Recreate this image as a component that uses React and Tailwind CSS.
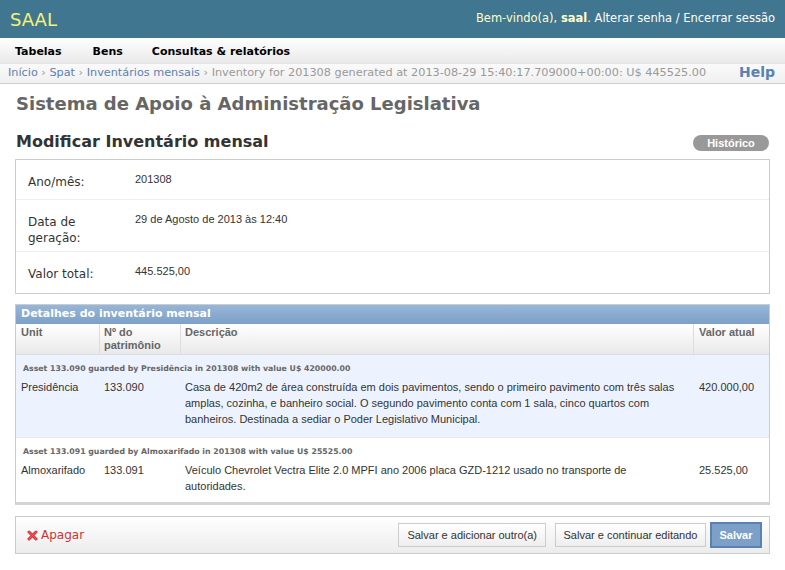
import { useState } from "react";

const ui = { fontFamily: '"DejaVu Sans", sans-serif' };
const arial = { fontFamily: '"Liberation Sans", Arial, sans-serif' };

const fields = [
  { label: "Ano/mês:", value: "201308", h: "h-[40px]" },
  { label: "Data de geração:", value: "29 de Agosto de 2013 às 12:40", h: "h-[52px]" },
  { label: "Valor total:", value: "445.525,00", h: "h-[41px]" },
];

const items = [
  {
    title: "Asset 133.090 guarded by Presidência in 201308 with value U$ 420000.00",
    unit: "Presidência",
    number: "133.090",
    description:
      "Casa de 420m2 de área construída em dois pavimentos, sendo o primeiro pavimento com três salas amplas, cozinha, e banheiro social. O segundo pavimento conta com 1 sala, cinco quartos com banheiros. Destinada a sediar o Poder Legislativo Municipal.",
    value: "420.000,00",
  },
  {
    title: "Asset 133.091 guarded by Almoxarifado in 201308 with value U$ 25525.00",
    unit: "Almoxarifado",
    number: "133.091",
    description:
      "Veículo Chevrolet Vectra Elite 2.0 MPFI ano 2006 placa GZD-1212 usado no transporte de autoridades.",
    value: "25.525,00",
  },
];

const DeleteIcon = () => (
  <svg width="11" height="11" viewBox="0 0 11 11" className="mr-[3px]">
    <path d="M2 2 L9 9 M9 2 L2 9" stroke="#d9363e" strokeWidth="3" strokeLinecap="round" />
    <path d="M2 2 L9 9 M9 2 L2 9" stroke="#f05a60" strokeWidth="1" strokeLinecap="round" />
  </svg>
);

export default function App() {
  const [rows] = useState(items);

  return (
    <div className="min-h-screen bg-white text-[#333]" style={ui}>
      {/* header */}
      <div className="h-[38px] bg-[#417690] flex items-center justify-between px-[10px]">
        <div className="text-[18px] text-[#f4f379] leading-none mt-[1px]">SAAL</div>
        <div className="text-[11.5px] text-white">
          <span className="text-[#ffc]">
            Bem-vindo(a), <strong>saal</strong>.
          </span>{" "}
          Alterar senha / Encerrar sessão
        </div>
      </div>

      {/* menu */}
      <div className="h-[25px] bg-gradient-to-b from-white to-[#e9e9e9] flex items-center pt-[3px] text-[11px] font-bold text-black">
        <span className="ml-[15px]">Tabelas</span>
        <span className="ml-[31px]">Bens</span>
        <span className="ml-[29px]">Consultas &amp; relatórios</span>
      </div>

      {/* breadcrumbs */}
      <div className="h-[21px] bg-gradient-to-b from-[#fafafa] to-[#f0f0f0] border-t border-b border-[#e4e4e4] border-b-[#cdcdcd] flex items-center justify-between pl-[8px] pr-[10px]">
        <div className="text-[11.25px] text-[#999] whitespace-nowrap">
          <span className="text-[#5b80b2]">Início</span> ›{" "}
          <span className="text-[#5b80b2]">Spat</span> ›{" "}
          <span className="text-[#5b80b2]">Inventários mensais</span> › Inventory for 201308 generated at
          2013-08-29 15:40:17.709000+00:00: U$ 445525.00
        </div>
        <div className="text-[14px] font-bold text-[#5b80b2] -mt-[3px]">Help</div>
      </div>

      <div className="px-[15px]">
        <h1 className="text-[18px] leading-[21px] font-bold text-[#666] mt-[9px] ml-[1px]">
          Sistema de Apoio à Administração Legislativa
        </h1>

        <div className="flex items-center justify-between mt-[17px]">
          <h2 className="text-[16px] leading-[19px] font-bold text-[#333] ml-[1px]">Modificar Inventário mensal</h2>
          <span
            className="w-[76px] h-[16px] rounded-full bg-[#999] text-white text-[11px] font-bold flex items-center justify-center mr-[1px] mt-[4px]"
            style={arial}
          >
            Histórico
          </span>
        </div>

        {/* fieldset */}
        <div className="mt-[8px] border border-[#ccc]">
          {fields.map((f, i) => (
            <div
              key={f.label}
              className={`${f.h} flex px-[12px] pt-[14px] ${i < fields.length - 1 ? "border-b border-[#eee]" : ""}`}
            >
              <div className="w-[107px] text-[12px] leading-[16px] pr-[30px]">{f.label}</div>
              <div className="text-[11px] leading-[14px] -mt-[2px]" style={arial}>
                {f.value}
              </div>
            </div>
          ))}
        </div>

        {/* inline group */}
        <div className="mt-[10px] border border-[#ccc] border-b-[3px] border-b-[#d4d4d4]">
          <div className="h-[19px] bg-gradient-to-b from-[#97b6d8] to-[#7ca0c7] text-white text-[11px] font-bold flex items-center pl-[5px]">
            Detalhes do inventário mensal
          </div>
          <div
            className="grid grid-cols-[83px_81px_513px_76px] bg-gradient-to-b from-white to-[#e9e9e9] border-b border-[#ddd] text-[11px] font-bold text-[#666] leading-[13px]"
            style={arial}
          >
            <div className="px-[5px] pt-[2px] pb-[2px]">Unit</div>
            <div className="px-[4px] pt-[2px] pb-[2px] border-l border-[#ddd]">
              Nº do
              <br />
              patrimônio
            </div>
            <div className="px-[4px] pt-[2px] pb-[2px] border-l border-[#ddd]">Descrição</div>
            <div className="px-[5px] pt-[2px] pb-[2px] border-l border-[#ddd]">Valor atual</div>
          </div>
          {rows.map((r, i) => (
            <div
              key={r.number}
              className={`${i === 0 ? "bg-[#edf3fe] pb-[10px]" : "bg-white border-t border-[#e8e8e8] pb-[8px]"} pt-[9px]`}
            >
              <div className="pl-[7px] text-[7.8px] font-bold text-[#666] leading-[10px]">{r.title}</div>
              <div className="grid grid-cols-[83px_81px_513px_76px] mt-[5px] text-[11px] leading-[16px] text-[#333]" style={arial}>
                <div className="px-[5px]">{r.unit}</div>
                <div className="px-[5px]">{r.number}</div>
                <div className="px-[5px] pr-[12px]">{r.description}</div>
                <div className="px-[6px]">{r.value}</div>
              </div>
            </div>
          ))}
        </div>

        {/* submit row */}
        <div className="mt-[11px] h-[38px] border border-[#ccc] bg-gradient-to-b from-white to-[#ececec] flex items-center pl-[11px] pr-[7px]">
          <div className="flex items-center text-[12px] text-[#cc3434]">
            <DeleteIcon />
            Apagar
          </div>
          <div className="ml-auto flex items-center text-[11px]" style={arial}>
            <button className="h-[24px] px-[8px] border border-[#ccc] bg-gradient-to-b from-white to-[#eee] text-[#333]">
              Salvar e adicionar outro(a)
            </button>
            <button className="h-[24px] w-[151px] ml-[9px] border border-[#ccc] bg-gradient-to-b from-white to-[#eee] text-[#333]">
              Salvar e continuar editando
            </button>
            <button className="h-[26px] w-[52px] ml-[4px] border-2 border-[#5b80b2] bg-[#7ca0c7] text-white font-bold">
              Salvar
            </button>
          </div>
        </div>
      </div>
    </div>
  );
}
